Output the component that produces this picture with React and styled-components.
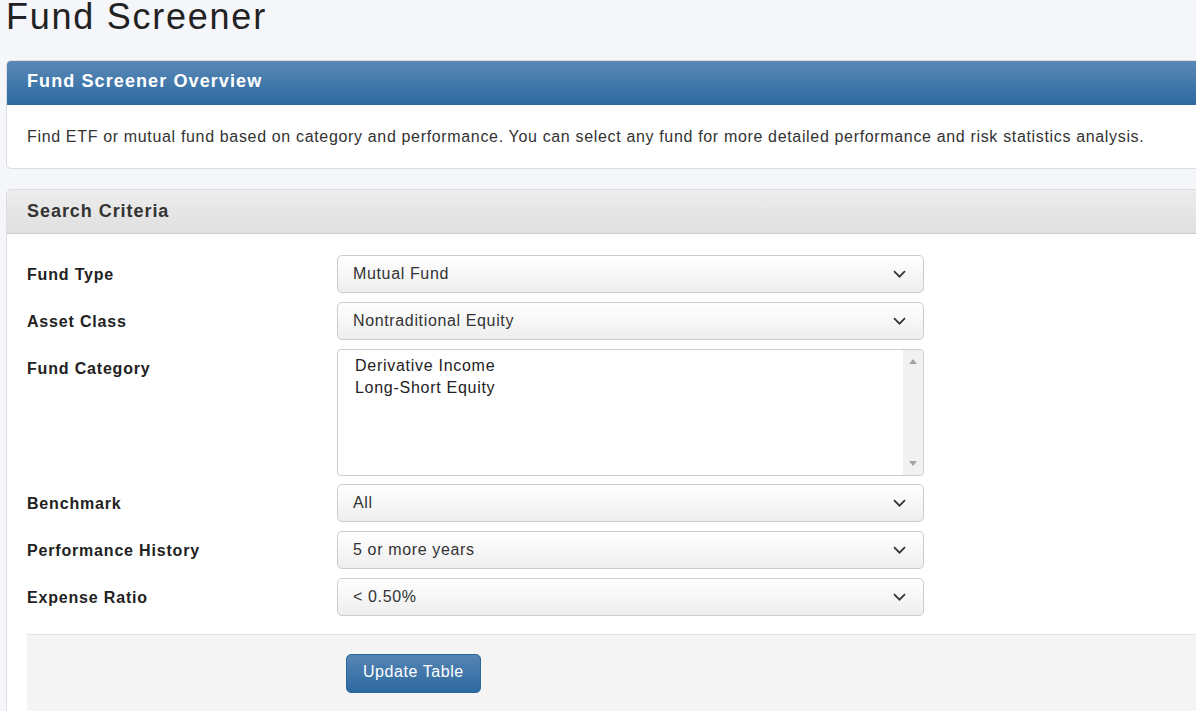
import React from "react";
import styled, { createGlobalStyle } from "styled-components";

const GlobalStyle = createGlobalStyle`
  html, body {
    margin: 0;
    padding: 0;
    background: #f5f6fa;
    overflow: hidden;
  }
  body {
    font-family: "Liberation Sans", Arial, sans-serif;
    color: #333;
  }
`;

const Page = styled.div`
  width: 1260px;
  padding: 0 0 0 6px;
  box-sizing: border-box;
`;

const Title = styled.h1`
  margin: -3px 0 23px 0;
  font-size: 36px;
  line-height: 40px;
  font-weight: normal;
  letter-spacing: 1.75px;
  color: #222;
`;

const Panel = styled.section`
  background: #fff;
  border: 1px solid #dcdde1;
  border-radius: 5px;
  overflow: hidden;
  margin-bottom: 20px;
`;

const PanelHeader = styled.div`
  height: 44px;
  box-sizing: border-box;
  display: flex;
  align-items: center;
  padding: 0 20px ${(p) => (p.$variant === "primary" ? "2px" : "0")};
  font-size: 18px;
  font-weight: bold;
  letter-spacing: ${(p) => (p.$variant === "primary" ? "1.1px" : "0.95px")};
  color: ${(p) => (p.$variant === "primary" ? "#fff" : "#333")};
  background: ${(p) =>
    p.$variant === "primary"
      ? "linear-gradient(#5a89b6, #2e6aa1)"
      : "linear-gradient(#ececec, #e0e0e0)"};
  border-bottom: 1px solid
    ${(p) => (p.$variant === "primary" ? "#2e6aa1" : "#cfcfcf")};
`;

const PanelBody = styled.div`
  padding: 21px 20px 19px;
  font-size: 16px;
  line-height: 22.85px;
  letter-spacing: 0.66px;
`;

const FormBody = styled.div`
  padding: 21px 0 0 20px;
`;

const FormGrid = styled.div`
  display: grid;
  grid-template-columns: 310px 587px;
  row-gap: 8px;
  align-items: start;
`;

const Label = styled.div`
  font-size: 16px;
  font-weight: bold;
  line-height: 38px;
  padding-top: 1px;
  letter-spacing: 0.82px;
  color: #222;
`;

const SelectBox = styled.div`
  height: 38.5px;
  box-sizing: border-box;
  display: flex;
  align-items: center;
  justify-content: space-between;
  padding: 0 17px 0 15px;
  border: 1px solid #cccccc;
  border-radius: 5px;
  background: linear-gradient(#ffffff, #eeeeee);
  font-size: 16px;
  letter-spacing: 0.64px;
  color: #333;
`;

const ListBox = styled.div`
  height: 127px;
  box-sizing: border-box;
  display: flex;
  border: 1px solid #cccccc;
  border-radius: 4px;
  background: #fff;
  overflow: hidden;
`;

const Options = styled.div`
  flex: 1;
  padding: 5px 0 0 17px;
  font-size: 16px;
  line-height: 22.3px;
  letter-spacing: 0.72px;
  color: #222;
`;

const ScrollTrack = styled.div`
  width: 20px;
  background: #f1f1f1;
  display: flex;
  flex-direction: column;
  justify-content: space-between;
  align-items: center;
  padding: 9px 0;
  box-sizing: border-box;
`;

const Arrow = styled.div`
  width: 0;
  height: 0;
  border-left: 4.5px solid transparent;
  border-right: 4.5px solid transparent;
  ${(p) =>
    p.$dir === "up"
      ? "border-bottom: 5px solid #a3a3a3;"
      : "border-top: 5px solid #a3a3a3;"}
`;

const Footer = styled.div`
  margin-top: 17px;
  border-top: 1px solid #e3e3e3;
  background: #f4f4f4;
  padding: 19px 0 40px 319px;
`;

const Button = styled.button`
  height: 39.5px;
  padding: 0 16px 3px;
  border: 1px solid #2b669a;
  border-radius: 5px;
  background: linear-gradient(#5585b4, #2d69a0);
  color: #fff;
  font-family: "Liberation Sans", Arial, sans-serif;
  font-size: 16px;
  letter-spacing: 0.56px;
  cursor: pointer;
`;

const Chevron = () => (
  <svg width="13" height="8" viewBox="0 0 13 8" fill="none">
    <path d="M1 1.2l5.5 5.5 5.5-5.5" stroke="#333" strokeWidth="1.7" />
  </svg>
);

const Select = ({ value }) => (
  <SelectBox>
    <span>{value}</span>
    <Chevron />
  </SelectBox>
);

const rows = [
  ["Fund Type", "Mutual Fund"],
  ["Asset Class", "Nontraditional Equity"],
  ["Fund Category", null],
  ["Benchmark", "All"],
  ["Performance History", "5 or more years"],
  ["Expense Ratio", "< 0.50%"],
];

export default function App() {
  return (
    <>
      <GlobalStyle />
      <Page>
        <Title>Fund Screener</Title>
        <Panel>
          <PanelHeader $variant="primary">Fund Screener Overview</PanelHeader>
          <PanelBody>
            Find ETF or mutual fund based on category and performance. You can
            select any fund for more detailed performance and risk statistics
            analysis.
          </PanelBody>
        </Panel>
        <Panel>
          <PanelHeader>Search Criteria</PanelHeader>
          <FormBody>
            <FormGrid>
              {rows.map(([label, value]) => (
                <React.Fragment key={label}>
                  <Label>{label}</Label>
                  {value !== null ? (
                    <Select value={value} />
                  ) : (
                    <ListBox>
                      <Options>
                        <div>Derivative Income</div>
                        <div>Long-Short Equity</div>
                      </Options>
                      <ScrollTrack>
                        <Arrow $dir="up" />
                        <Arrow $dir="down" />
                      </ScrollTrack>
                    </ListBox>
                  )}
                </React.Fragment>
              ))}
            </FormGrid>
            <Footer>
              <Button>Update Table</Button>
            </Footer>
          </FormBody>
        </Panel>
      </Page>
    </>
  );
}
